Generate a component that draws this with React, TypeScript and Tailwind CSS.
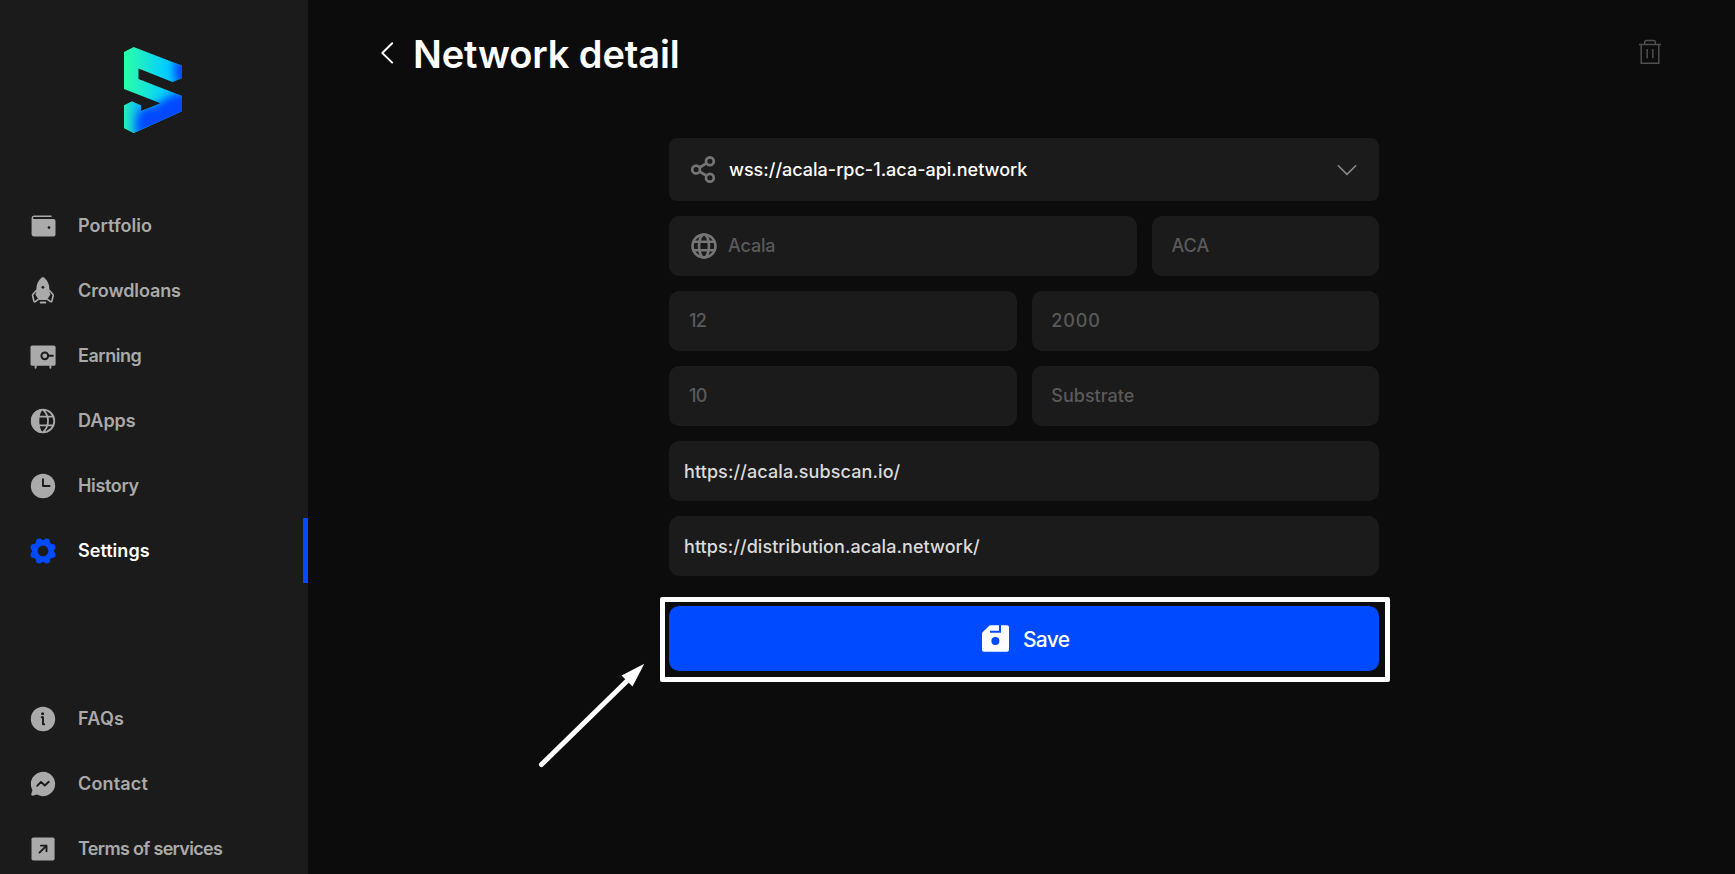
import type { ReactNode } from "react";

function Icon({ children, className = "" }: { children: ReactNode; className?: string }) {
  return (
    <svg width="30" height="30" viewBox="0 0 30 30" fill="none" className={`shrink-0 ${className}`}>
      {children}
    </svg>
  );
}

const DARK = "#1b1b1b";

const wallet = (
  <Icon>
    <path
      fill="currentColor"
      fillRule="evenodd"
      d="M25.4 7.9H6.3C5.6 7.9 5 7.5 5 6.9S5.6 6 6.3 6H23c.5 0 .8-.4.8-.8s-.3-.8-.8-.8H6.2C4.7 4.4 3.6 5.500 3.600 7v16.200c0 1.200 1 2.200 2.200 2.200h19.600c1.200 0 2.100-.9 2.100-2V10c0-1.200-.9-2.100-2.100-2.100ZM21 15.200a1.400 1.400 0 1 1 0 2.800 1.400 1.400 0 0 1 0-2.800Z"
    />
    <path d="M6 7.200H24" stroke={DARK} strokeWidth="1" />
  </Icon>
);

const rocket = (
  <Icon>
    <path
      fill="currentColor"
      d="M13.700 1.600c.7-.6 1.700-.6 2.400 0 3.700 3.100 5.300 7.300 5.300 11.200l1.200 5.400-3.300 5.300c-.2.400-.5.500-.9.500h-7c-.4 0-.7-.2-.9-.5l-3.300-5.300 1.200-5.400c0-3.900 1.600-8.100 5.300-11.200Z"
    />
    <circle cx="14.900" cy="11.300" r="1.400" fill={DARK} />
    <path
      d="M8.300 14.600 5 18.200c-.4.500-.5.800-.4 1.300l1.300 5.600c.2.800.8.900 1.400.5l3.200-2.300M21.500 14.600l3.300 3.600c.4.500.5.800.4 1.300l-1.300 5.600c-.2.800-.8.900-1.400.5l-3.200-2.300"
      stroke="currentColor"
      strokeWidth="1.700"
      strokeLinejoin="round"
    />
    <path d="M8.100 16.200 6.500 18.800l.9 4M21.700 16.200l1.600 2.600-.9 4" stroke={DARK} strokeWidth=".7" />
    <path d="M12.600 26.500h4.800" stroke="currentColor" strokeWidth="1.800" strokeLinecap="round" />
  </Icon>
);

const vault = (
  <Icon>
    <rect x="2.500" y="4.400" width="25.100" height="20.400" rx="1.900" fill="currentColor" />
    <path d="M7.600 24v2.800M22.400 24v2.800" stroke="currentColor" strokeWidth="1.900" strokeLinecap="round" />
    <circle cx="16.800" cy="14.800" r="3.400" stroke={DARK} strokeWidth="2" />
    <path d="M20.200 14.800h4.600" stroke={DARK} strokeWidth="2" strokeLinecap="round" />
  </Icon>
);

const dapps = (
  <Icon>
    <circle cx="15" cy="15" r="11.300" stroke="currentColor" strokeWidth="1.800" />
    <path
      d="M15 3A12 12 0 0 0 15 27C12.600 24.500 11.300 20.200 11.300 15S12.600 5.500 15 3Z"
      fill="currentColor"
    />
    <path d="M15 3.600c6.700 6.500 6.700 16.300 0 22.800" stroke="currentColor" strokeWidth="1.800" />
    <path d="M10.500 10.700h15.500M10.500 19.300h15.500" stroke="currentColor" strokeWidth="1.800" />
  </Icon>
);

const clock = (
  <Icon>
    <circle cx="15" cy="15" r="12.200" fill="currentColor" />
    <path d="M15 8.200V15h6.600" stroke={DARK} strokeWidth="1.900" strokeLinecap="round" strokeLinejoin="round" />
  </Icon>
);

const gear = (
  <Icon className="text-[#004bff]">
    <g fill="currentColor">
      <circle cx="15" cy="15" r="11" />
      <circle cx="18.800" cy="5.750" r="3.200" />
      <circle cx="24.250" cy="11.200" r="3.200" />
      <circle cx="24.250" cy="18.800" r="3.200" />
      <circle cx="18.800" cy="24.250" r="3.200" />
      <circle cx="11.200" cy="24.250" r="3.200" />
      <circle cx="5.750" cy="18.800" r="3.200" />
      <circle cx="5.750" cy="11.200" r="3.200" />
      <circle cx="11.200" cy="5.750" r="3.200" />
    </g>
    <circle cx="15" cy="15" r="5.400" fill={DARK} />
  </Icon>
);

const info = (
  <Icon>
    <circle cx="15" cy="15" r="12.200" fill="currentColor" />
    <circle cx="14.600" cy="9.800" r="1.500" fill={DARK} />
    <path d="M13.700 13.300H15v7h1.200" stroke={DARK} strokeWidth="1.900" strokeLinecap="round" strokeLinejoin="round" />
  </Icon>
);

const messenger = (
  <Icon>
    <path
      fill="currentColor"
      d="M15 2.800a12.200 12.200 0 1 1-6.100 22.800l-4.100 1.100c-1 .3-1.700-.5-1.500-1.400L4.400 21A12.200 12.200 0 0 1 15 2.800Z"
    />
    <path
      d="M9.200 16.800 13 12.900l3.800 3.600 4-3.700"
      stroke={DARK}
      strokeWidth="1.900"
      strokeLinecap="round"
      strokeLinejoin="round"
    />
  </Icon>
);

const arrowSquare = (
  <Icon>
    <rect x="3.500" y="3.400" width="23.100" height="23.100" rx="1.800" fill="currentColor" />
    <path
      d="M12.900 11.600h5.600v5.600M18.500 11.600l-7 7"
      stroke={DARK}
      strokeWidth="1.900"
      strokeLinecap="round"
      strokeLinejoin="round"
    />
  </Icon>
);

function NavItem({
  icon,
  label,
  tracking,
  active = false,
}: {
  icon: ReactNode;
  label: string;
  tracking: string;
  active?: boolean;
}) {
  return (
    <a
      className={`flex h-[65px] shrink-0 items-center gap-[20px] border-r-[5px] pt-px pl-[28px] text-[18px] leading-6 font-semibold ${
        active ? "border-[#004bff] text-white" : "border-transparent text-[#aaaaaa]"
      }`}
    >
      {icon}
      <span className={tracking}>{label}</span>
    </a>
  );
}

function Logo() {
  return (
    <svg width="58" height="86" viewBox="124 47 58 86" className="ml-[124px] shrink-0">
      <defs>
        <linearGradient id="base" gradientUnits="userSpaceOnUse" x1="124" y1="0" x2="165" y2="0">
          <stop offset="0" stopColor="#2bffa6" />
          <stop offset=".5" stopColor="#19e8d0" />
          <stop offset="1" stopColor="#00cfff" />
        </linearGradient>
        <linearGradient id="foot" gradientUnits="userSpaceOnUse" x1="124" y1="0" x2="138" y2="0">
          <stop offset="0" stopColor="#22f0bc" />
          <stop offset="1" stopColor="#0cbcf0" />
        </linearGradient>
        <filter id="soft" filterUnits="userSpaceOnUse" x="100" y="20" width="120" height="140">
          <feGaussianBlur stdDeviation="4" />
        </filter>
        <clipPath id="mark">
          <path d="M124 52 133.700 47 182 65.700V78l-9.500 4L138.500 68.500V79L182 96v15.300L133.700 133 124 128v-22.500l8-4 9 4v5.700l19.500-8L124 89Z" />
        </clipPath>
      </defs>
      <g clipPath="url(#mark)">
        <rect x="124" y="47" width="58" height="86" fill="url(#base)" />
        <path d="M124 100H141V110L150 108V133H124Z" fill="url(#foot)" />
        <g filter="url(#soft)" fill="#0048ff">
          <path d="M174 60h22v26h-18c-4-5-5-14-4-26Z" />
          <path d="M137 116 142 109 159 103 174 93H200V112L146 146 136 130Z" />
        </g>
      </g>
    </svg>
  );
}

function Field({ children, className = "" }: { children: ReactNode; className?: string }) {
  return (
    <div
      className={`flex h-[60px] items-center rounded-[10px] bg-[#1b1b1b] text-[18px] leading-6 font-medium ${className}`}
    >
      {children}
    </div>
  );
}

export default function App() {
  return (
    <div className="flex h-[874px] w-[1735px] overflow-hidden bg-[#0c0c0c] font-['Inter','Liberation_Sans',sans-serif]">
      <aside className="flex w-[308px] shrink-0 flex-col overflow-hidden bg-[#1b1b1b] pt-[47px]">
        <Logo />
        <nav className="mt-[60px] flex flex-col">
          <NavItem icon={wallet} label="Portfolio" tracking="tracking-[0.05px]" />
          <NavItem icon={rocket} label="Crowdloans" tracking="tracking-[-0.1px]" />
          <NavItem icon={vault} label="Earning" tracking="tracking-[-0.45px]" />
          <NavItem icon={dapps} label="DApps" tracking="tracking-[0px]" />
          <NavItem icon={clock} label="History" tracking="tracking-[-0.35px]" />
          <NavItem icon={gear} label="Settings" tracking="tracking-[0.03px]" active />
        </nav>
        <nav className="mt-[103px] flex flex-col">
          <NavItem icon={info} label="FAQs" tracking="tracking-[0.28px]" />
          <NavItem icon={messenger} label="Contact" tracking="tracking-[0.17px]" />
          <NavItem icon={arrowSquare} label="Terms of services" tracking="tracking-[-0.68px]" />
        </nav>
      </aside>

      <main className="flex-1">
        <header className="flex h-[108px] items-center pr-[73px] pl-[72px]">
          <svg width="14" height="24" viewBox="0 0 14 24" fill="none" className="-mt-[2px]">
            <path
              d="M12.200 2.200 2.300 12l9.900 9.600"
              stroke="#fff"
              strokeWidth="1.900"
              strokeLinecap="round"
              strokeLinejoin="round"
            />
          </svg>
          <h1 className="ml-[19px] text-[38px] leading-[48px] font-semibold tracking-[-0.12px] text-white">
            Network detail
          </h1>
          <svg width="24" height="26" viewBox="0 0 24 26" fill="none" className="-mt-[4px] ml-auto">
            <path
              d="M1 5.500h22M3.200 5.500v18.800h17.600V5.500M6.700 5.500V3.200c0-1 .7-1.700 1.700-1.700h7.200c1 0 1.700.7 1.700 1.700v2.300M9.200 10v9.300M14.800 10v9.300"
              stroke="#4f4f4f"
              strokeWidth="1.500"
            />
          </svg>
        </header>

        <form className="mt-[30px] ml-[361px] flex w-[710px] flex-col gap-[15px]">
          <div className="flex h-[63px] items-center rounded-lg bg-[#1b1b1b] pr-[23px] pl-[20px] text-[18px] leading-6 font-medium text-white">
            <svg width="30" height="30" viewBox="0 0 30 30" fill="none" stroke="#757575" strokeWidth="2.700">
              <circle cx="20.900" cy="6.300" r="3.900" />
              <circle cx="7.100" cy="14.500" r="3.900" />
              <circle cx="20.900" cy="22.800" r="3.900" />
              <path d="m10.500 12.500 6.900-4.200M10.500 16.500l6.900 4.200" />
            </svg>
            <span className="ml-[10px]">wss://acala-rpc-1.aca-api.network</span>
            <svg width="20" height="12" viewBox="0 0 20 12" fill="none" className="-mr-px ml-auto">
              <path d="M1.300 1.800 10 10.400l8.700-8.600" stroke="#8a8a8a" strokeWidth="1.600" strokeLinecap="round" />
            </svg>
          </div>
          <div className="flex gap-[15px] text-[#5a5a5a]">
            <Field className="w-[468px] pl-[20px]">
              <svg width="30" height="30" viewBox="0 0 30 30" fill="none" stroke="#757575" strokeWidth="2.600">
                <circle cx="15" cy="15" r="11.500" />
                <ellipse cx="15" cy="15" rx="5" ry="11.500" />
                <path d="M4 10.800h22M4 19.200h22" />
              </svg>
              <span className="ml-[9px] tracking-[-0.15px]">Acala</span>
            </Field>
            <Field className="flex-1 pl-[19.500px]">ACA</Field>
          </div>
          <div className="flex gap-[15px] text-[#5a5a5a]">
            <Field className="w-[348px] pl-[20px]">
              <span className="tracking-[-0.6px]">12</span>
            </Field>
            <Field className="flex-1 pl-[19.300px]">
              <span className="tracking-[0.9px]">2000</span>
            </Field>
          </div>
          <div className="flex gap-[15px] text-[#5a5a5a]">
            <Field className="w-[348px] pl-[20px]">
              <span className="tracking-[-0.6px]">10</span>
            </Field>
            <Field className="flex-1 pl-[19.300px]">
              <span className="tracking-[0px]">Substrate</span>
            </Field>
          </div>
          <Field className="pl-[15px] pt-px text-[#dcdcdc]">
            <span className="tracking-[0.1px]">https://acala.subscan.io/</span>
          </Field>
          <Field className="pl-[15px] pt-px text-[#dcdcdc]">
            <span className="tracking-[0.06px]">https://distribution.acala.network/</span>
          </Field>
          <div className="relative mt-[15px]">
            <button
              type="button"
              className="flex h-[65px] w-full items-center rounded-[10px] bg-[#004bff] pl-[313px] text-white"
            >
              <svg width="27" height="27" viewBox="0 0 27 27" fill="none">
                <path
                  fill="#fff"
                  d="M8.600.2H17v5.500H8v2.100h11V.2h6c1.100 0 2 .9 2 2v22.600c0 1.100-.9 2-2 2H2c-1.100 0-2-.9-2-2V8.600c0-.5.200-1 .6-1.400L7.200.8c.4-.4.900-.6 1.400-.6Z"
                />
                <circle cx="13.400" cy="16" r="4" fill="#004bff" />
              </svg>
              <span className="mt-[2px] ml-[14px] text-[21px] leading-6 font-medium tracking-[-0.7px]">Save</span>
            </button>
            <div className="pointer-events-none absolute -top-[9px] -right-[11px] -bottom-[11px] -left-[9px] rounded-[2px] border-[5px] border-white" />
            <svg
              width="112"
              height="112"
              viewBox="535 660 112 112"
              className="pointer-events-none absolute top-[54px] -left-[134px]"
            >
              <path d="M541.500 764.500 628 680" stroke="#fff" strokeWidth="5" strokeLinecap="round" />
              <path d="M644.300 663.700 621.600 675.500 632.500 686.500Z" fill="#fff" />
            </svg>
          </div>
        </form>
      </main>
    </div>
  );
}
